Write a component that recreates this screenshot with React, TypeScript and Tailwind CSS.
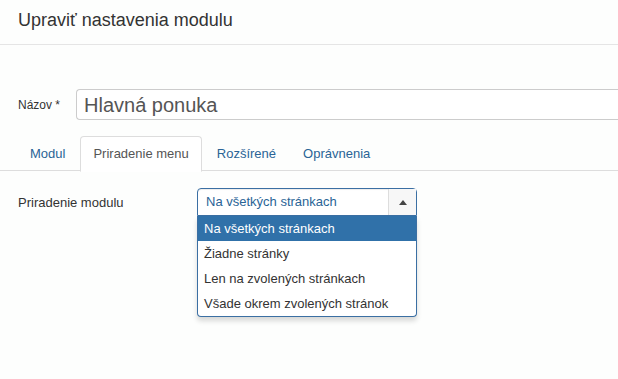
import { useState } from "react"

const options = [
  "Na všetkých stránkach",
  "Žiadne stránky",
  "Len na zvolených stránkach",
  "Všade okrem zvolených stránok",
]

const tabs = ["Modul", "Priradenie menu", "Rozšírené", "Oprávnenia"]

export default function App() {
  const [active] = useState(1)
  const [selected] = useState(0)

  return (
    <div className="w-[618px] h-[379px] bg-[#fdfefd] text-[#333] overflow-hidden" style={{ fontFamily: "'Liberation Sans', Arial, sans-serif" }}>
      <div className="h-[45px] border-b border-[#e5e5e5] pl-[18px] pt-[9px]">
        <h1 className="text-[18px] leading-[22px] text-[#333]">Upraviť nastavenia modulu</h1>
      </div>

      <div className="flex items-center mt-[44px] pl-[18px]">
        <label className="w-[58px] text-[12px] text-[#333]">Názov *</label>
        <div className="flex-1 h-[31px] border border-[#ccc] border-r-0 rounded-l-[4px] bg-white flex items-center pl-[7px] text-[20px] text-[#555]">
          Hlavná ponuka
        </div>
      </div>

      <div className="flex mt-[16px] pl-[18px] border-b border-[#ddd] h-[35px]">
        {tabs.map((t, i) => (
          <div
            key={t}
            className={
              i === active
                ? "px-[12px] mr-[3px] h-[36px] flex items-center text-[13px] text-[#555] bg-white border border-[#ddd] border-b-white rounded-t-[4px]"
                : "px-[12px] mr-[3px] h-[35px] flex items-center text-[13px] text-[#2a6496]"
            }
          >
            {t}
          </div>
        ))}
      </div>

      <div className="flex mt-[17px] pl-[18px]">
        <label className="w-[179px] text-[13px] text-[#333] pt-[5px]">Priradenie modulu</label>
        <div className="w-[220px]">
          <div className="h-[28px] border border-[#3b6fa3] rounded-t-[4px] bg-white flex items-center justify-between pl-[8px] shadow-[inset_0_1px_1px_rgba(0,0,0,0.075)]">
            <span className="text-[13px] text-[#2a6496]">{options[selected]}</span>
            <div className="w-[28px] h-[26px] border-l border-[#ddd] flex items-center justify-center bg-[#f7f7f7]">
              <svg width="8" height="5" viewBox="0 0 8 5">
                <path d="M0 5 L4 0 L8 5 Z" fill="#444" />
              </svg>
            </div>
          </div>
          <ul className="border border-[#3b6fa3] border-t-0 rounded-b-[4px] bg-white shadow-[0_4px_5px_rgba(0,0,0,0.15)]">
            {options.map((o, i) => (
              <li
                key={o}
                className={
                  i === selected
                    ? "h-[25px] flex items-center pl-[6px] text-[13px] bg-[#3071a9] text-white"
                    : "h-[25px] flex items-center pl-[6px] text-[13px] text-[#333]"
                }
              >
                {o}
              </li>
            ))}
          </ul>
        </div>
      </div>
    </div>
  )
}
